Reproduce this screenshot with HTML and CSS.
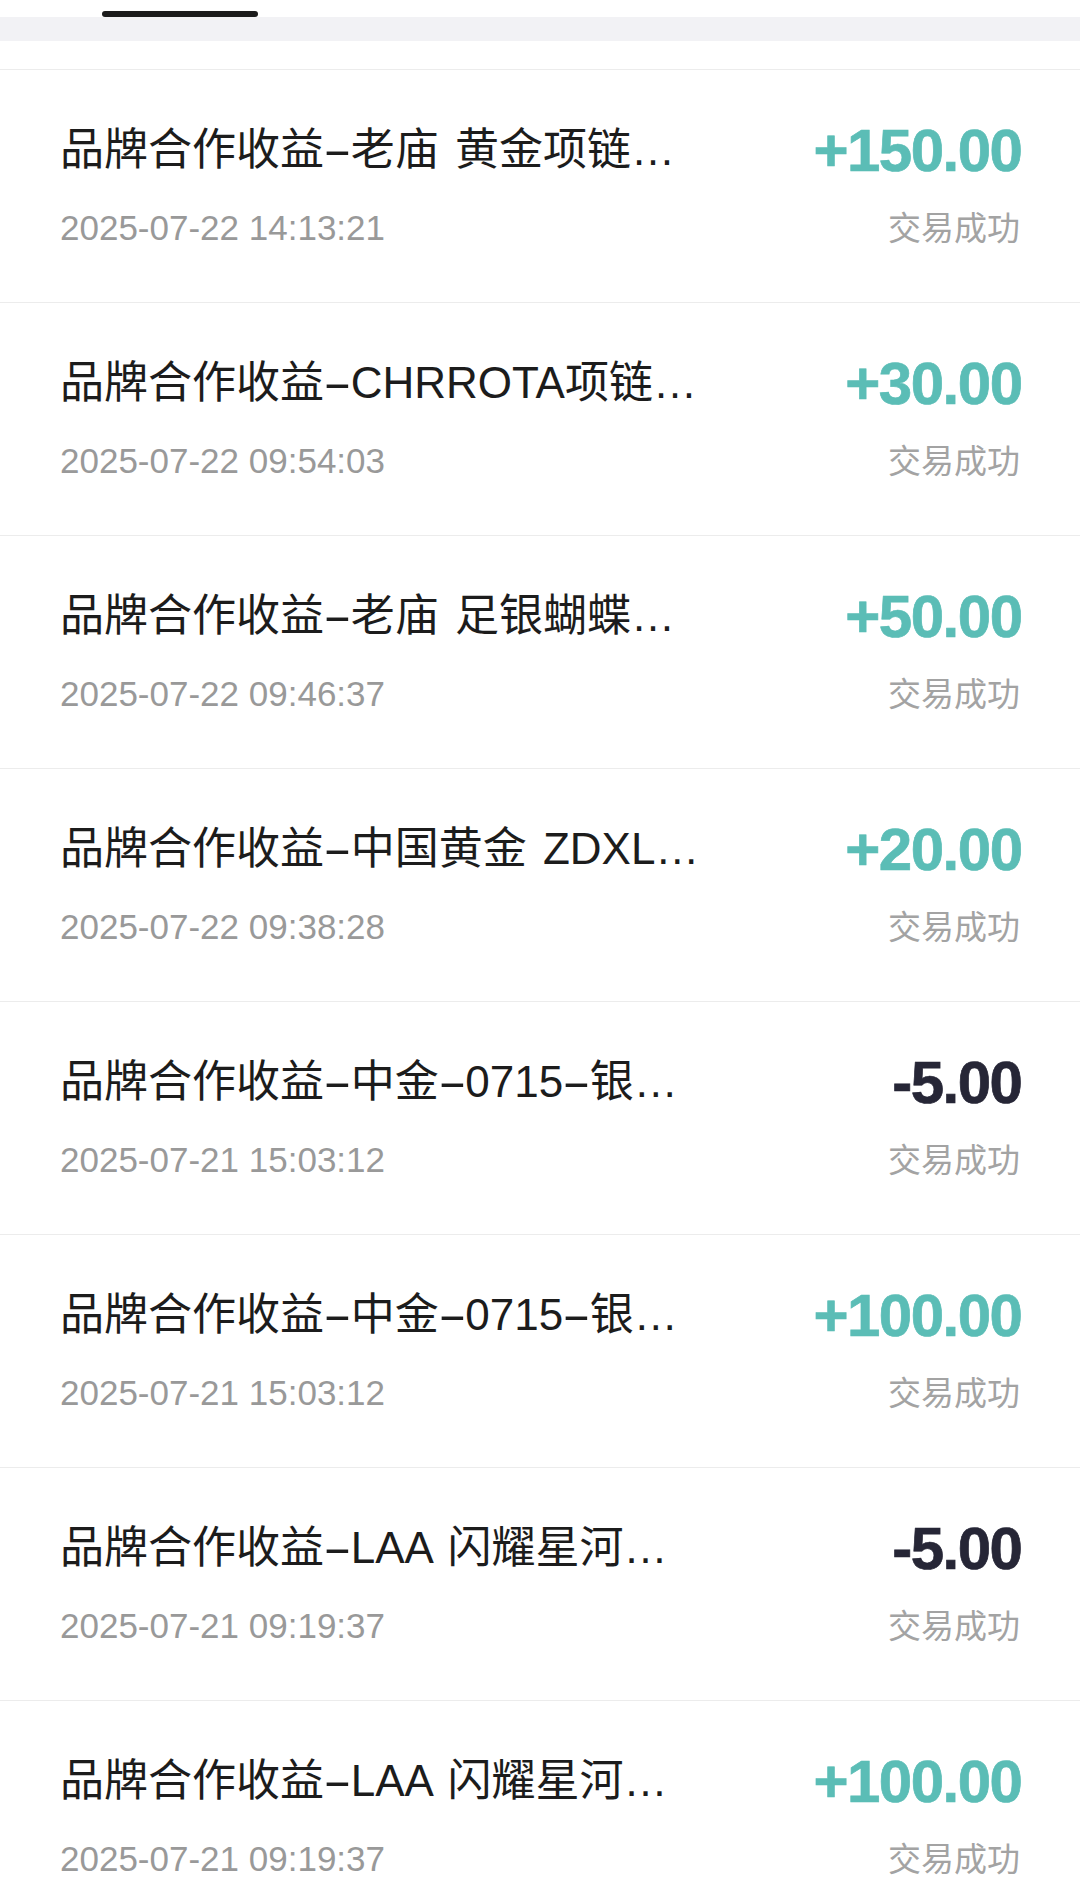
FILE: index.html
```html
<!DOCTYPE html>
<html lang="zh-CN">
<head>
<meta charset="utf-8">
<title>交易记录</title>
<link rel="stylesheet" href="styles.css">
</head>
<body>
<div class="page">
  <div class="tabbar"><div class="tab-indicator"></div></div>
  <div class="band"></div>
  <div class="spacer"></div>
  <ul class="list">
    <li class="row">
      <div class="line1"><span class="title">品牌合作收益<span class="dash">-</span>老庙 黄金项链…</span><span class="amount plus">+150.00</span></div>
      <div class="line2"><span class="date">2025-07-22 14:13:21</span><span class="status">交易成功</span></div>
    </li>
    <li class="row">
      <div class="line1"><span class="title">品牌合作收益<span class="dash">-</span>CHRROTA项链…</span><span class="amount plus">+30.00</span></div>
      <div class="line2"><span class="date">2025-07-22 09:54:03</span><span class="status">交易成功</span></div>
    </li>
    <li class="row">
      <div class="line1"><span class="title">品牌合作收益<span class="dash">-</span>老庙 足银蝴蝶…</span><span class="amount plus">+50.00</span></div>
      <div class="line2"><span class="date">2025-07-22 09:46:37</span><span class="status">交易成功</span></div>
    </li>
    <li class="row">
      <div class="line1"><span class="title">品牌合作收益<span class="dash">-</span>中国黄金 ZDXL…</span><span class="amount plus">+20.00</span></div>
      <div class="line2"><span class="date">2025-07-22 09:38:28</span><span class="status">交易成功</span></div>
    </li>
    <li class="row">
      <div class="line1"><span class="title">品牌合作收益<span class="dash">-</span>中金<span class="dash">-</span>0715<span class="dash">-</span>银…</span><span class="amount minus">-5.00</span></div>
      <div class="line2"><span class="date">2025-07-21 15:03:12</span><span class="status">交易成功</span></div>
    </li>
    <li class="row">
      <div class="line1"><span class="title">品牌合作收益<span class="dash">-</span>中金<span class="dash">-</span>0715<span class="dash">-</span>银…</span><span class="amount plus">+100.00</span></div>
      <div class="line2"><span class="date">2025-07-21 15:03:12</span><span class="status">交易成功</span></div>
    </li>
    <li class="row">
      <div class="line1"><span class="title">品牌合作收益<span class="dash">-</span>LAA 闪耀星河…</span><span class="amount minus">-5.00</span></div>
      <div class="line2"><span class="date">2025-07-21 09:19:37</span><span class="status">交易成功</span></div>
    </li>
    <li class="row">
      <div class="line1"><span class="title">品牌合作收益<span class="dash">-</span>LAA 闪耀星河…</span><span class="amount plus">+100.00</span></div>
      <div class="line2"><span class="date">2025-07-21 09:19:37</span><span class="status">交易成功</span></div>
    </li>
  </ul>
</div>
</body>
</html>
```

FILE: styles.css
```css
html, body {
  margin: 0;
  padding: 0;
  background: #ffffff;
}

body {
  font-family: "Liberation Sans", "Noto Sans CJK SC", sans-serif;
  overflow: hidden;
}

.page {
  width: 1080px;
}

.tabbar {
  height: 17px;
  background: #ffffff;
  padding-left: 102px;
  box-sizing: border-box;
  padding-top: 11px;
}

.tab-indicator {
  width: 156px;
  height: 6px;
  background: #1b1b1b;
  border-radius: 3px;
}

.band {
  height: 24px;
  background: #f2f2f5;
}

.spacer {
  height: 28px;
  background: #ffffff;
}

.list {
  list-style: none;
  margin: 0;
  padding: 0;
  border-top: 1px solid #ececec;
}

.row {
  padding: 50px 60px 54px 60px;
  border-bottom: 1px solid #ececec;
  display: flex;
  flex-direction: column;
  gap: 28px;
}

.line1 {
  height: 60px;
  display: flex;
  justify-content: space-between;
  align-items: flex-start;
}

.title {
  font-size: 44px;
  line-height: 60px;
  color: #1c1c1c;
  white-space: nowrap;
  word-spacing: 4px;
}

.dash {
  display: inline-block;
  transform: scaleX(2);
  margin: 0 6px;
}

.amount {
  font-size: 60px;
  line-height: 60px;
  font-weight: 700;
  letter-spacing: -1.5px;
  margin-right: -1.5px;
  padding-top: 1px;
  -webkit-text-stroke: 0.7px currentColor;
}

.amount.plus {
  color: #5bbdb6;
}

.amount.minus {
  color: #262636;
}

.line2 {
  height: 40px;
  display: flex;
  justify-content: space-between;
  align-items: baseline;
}

.date {
  font-size: 35px;
  line-height: 40px;
  color: #999999;
}

.status {
  font-size: 33px;
  line-height: 40px;
  color: #a3a3a3;
}
```
